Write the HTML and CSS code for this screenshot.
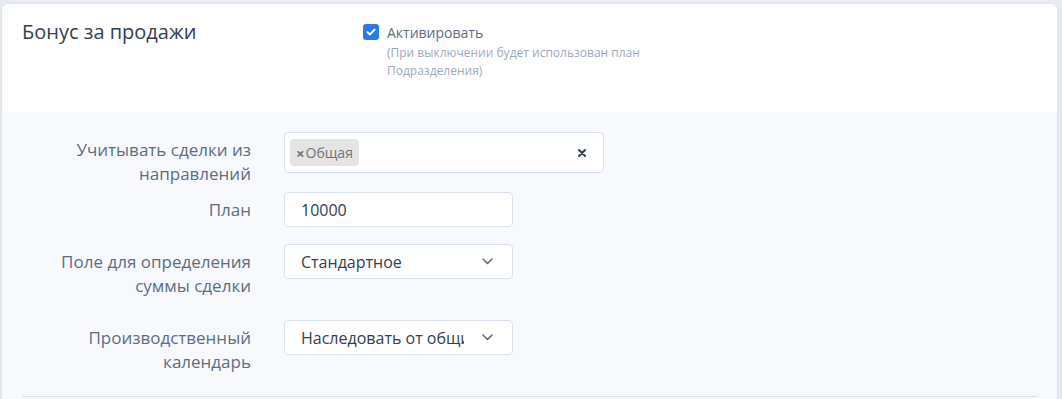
FILE: index.html
```html
<!DOCTYPE html>
<html lang="ru">
<head>
    <meta charset="UTF-8">
    <title>Бонус за продажи</title>
    <link rel="stylesheet" href="styles.css">
</head>
<body>
    <div class="card">
        <div class="card-header">
            <h2 class="card-title">Бонус за продажи</h2>
            <div class="activate">
                <span class="checkbox">
                    <svg width="10" height="8" viewBox="0 0 10 8"><path d="M1.5 4.2l2.4 2.3L8.6 1.6" fill="none" stroke="#fff" stroke-width="1.9" stroke-linecap="round" stroke-linejoin="round"/></svg>
                </span>
                <div>
                    <div class="activate-label">Активировать</div>
                    <div class="activate-hint">(При выключении будет использован план<br>Подразделения)</div>
                </div>
            </div>
        </div>

        <div class="card-body">
            <div class="form-row form-row-tight">
                <label class="form-label">Учитывать сделки из направлений</label>
                <div class="multiselect">
                    <span class="tag"><span class="tag-remove">×</span>Общая</span>
                    <span class="clear">
                        <svg width="8" height="8" viewBox="0 0 8 8"><path d="M1 1l6 6M7 1L1 7" stroke="#344050" stroke-width="2" stroke-linecap="round"/></svg>
                    </span>
                </div>
            </div>

            <div class="form-row">
                <label class="form-label">План</label>
                <div class="field field-short">10000</div>
            </div>

            <div class="form-row">
                <label class="form-label">Поле для определения суммы сделки</label>
                <div class="field field-short select">
                    <span class="select-text">Стандартное</span>
                    <svg class="chevron" width="11" height="7" viewBox="0 0 11 7"><path d="M1 1l4.5 4.5L10 1" fill="none" stroke="#5e6e82" stroke-width="1.6" stroke-linecap="round" stroke-linejoin="round"/></svg>
                </div>
            </div>

            <div class="form-row">
                <label class="form-label">Производственный календарь</label>
                <div class="field field-short select">
                    <span class="select-text">Наследовать от общих настроек</span>
                    <svg class="chevron" width="11" height="7" viewBox="0 0 11 7"><path d="M1 1l4.5 4.5L10 1" fill="none" stroke="#5e6e82" stroke-width="1.6" stroke-linecap="round" stroke-linejoin="round"/></svg>
                </div>
            </div>

            <div class="divider"></div>
        </div>
    </div>
</body>
</html>
```

FILE: styles.css
```css
body {
    font-family: "Open Sans", "Noto Sans", sans-serif;
    margin: 0;
    padding: 4px 5px 0 2px;
    background-color: #e6ebf3;
    color: #344050;
}
.card {
    background: #f7f9fc;
    border-radius: 6px 6px 0 0;
    overflow: hidden;
    box-shadow: 0 0 2px rgba(65, 69, 88, 0.12);
}
.card-header {
    background: #fff;
    height: 108px;
    box-sizing: border-box;
    padding: 14px 20px 0 20px;
    display: grid;
    grid-template-columns: 341px 1fr;
}
.card-title {
    margin: 0;
    font-size: 20px;
    font-weight: 400;
    line-height: 27px;
    color: #344050;
}
.activate {
    display: flex;
    gap: 8px;
    padding-top: 6px;
}
.checkbox {
    width: 16px;
    height: 16px;
    border-radius: 3px;
    background: #2c7be5;
    display: flex;
    align-items: center;
    justify-content: center;
    flex-shrink: 0;
}
.activate-label {
    font-size: 14px;
    line-height: 18px;
    color: #5e6e82;
}
.activate-hint {
    font-size: 12px;
    line-height: 18px;
    color: #9da9bb;
    margin-top: 2px;
}
.card-body {
    padding: 20px 20px 2px 20px;
}
.form-row {
    display: grid;
    grid-template-columns: 229px 1fr;
    column-gap: 33px;
    align-items: start;
    margin-bottom: 16px;
}
.form-row-tight {
    margin-bottom: 0;
}
.form-label {
    text-align: right;
    font-size: 17px;
    line-height: 24px;
    padding: 6px 0;
    color: #5e6e82;
}
.multiselect {
    width: 320px;
    height: 41px;
    box-sizing: border-box;
    background: #fff;
    border: 1px solid #d8e2ef;
    border-radius: 4px;
    display: flex;
    align-items: center;
    padding: 0 17px 0 5px;
}
.tag {
    background: #e4e4e4;
    border-radius: 4px;
    height: 27px;
    display: flex;
    align-items: center;
    padding: 0 6px 0 6px;
    font-size: 14px;
    color: #6c757d;
}
.tag-remove {
    font-size: 15px;
    font-weight: 700;
    color: #6c757d;
    margin-right: 1px;
}
.clear {
    margin-left: auto;
    display: flex;
}
.field {
    height: 35px;
    box-sizing: border-box;
    background: #fff;
    border: 1px solid #d8e2ef;
    border-radius: 4px;
    padding: 0 16px;
    font-size: 16px;
    color: #344050;
    display: flex;
    align-items: center;
}
.field-short {
    width: 229px;
}
.select {
    padding-right: 19px;
}
.select-text {
    flex: 1;
    white-space: nowrap;
    overflow: hidden;
    margin-right: 18px;
}
.chevron {
    flex-shrink: 0;
}
.divider {
    border-top: 1px solid #d8e2ef;
}
```
